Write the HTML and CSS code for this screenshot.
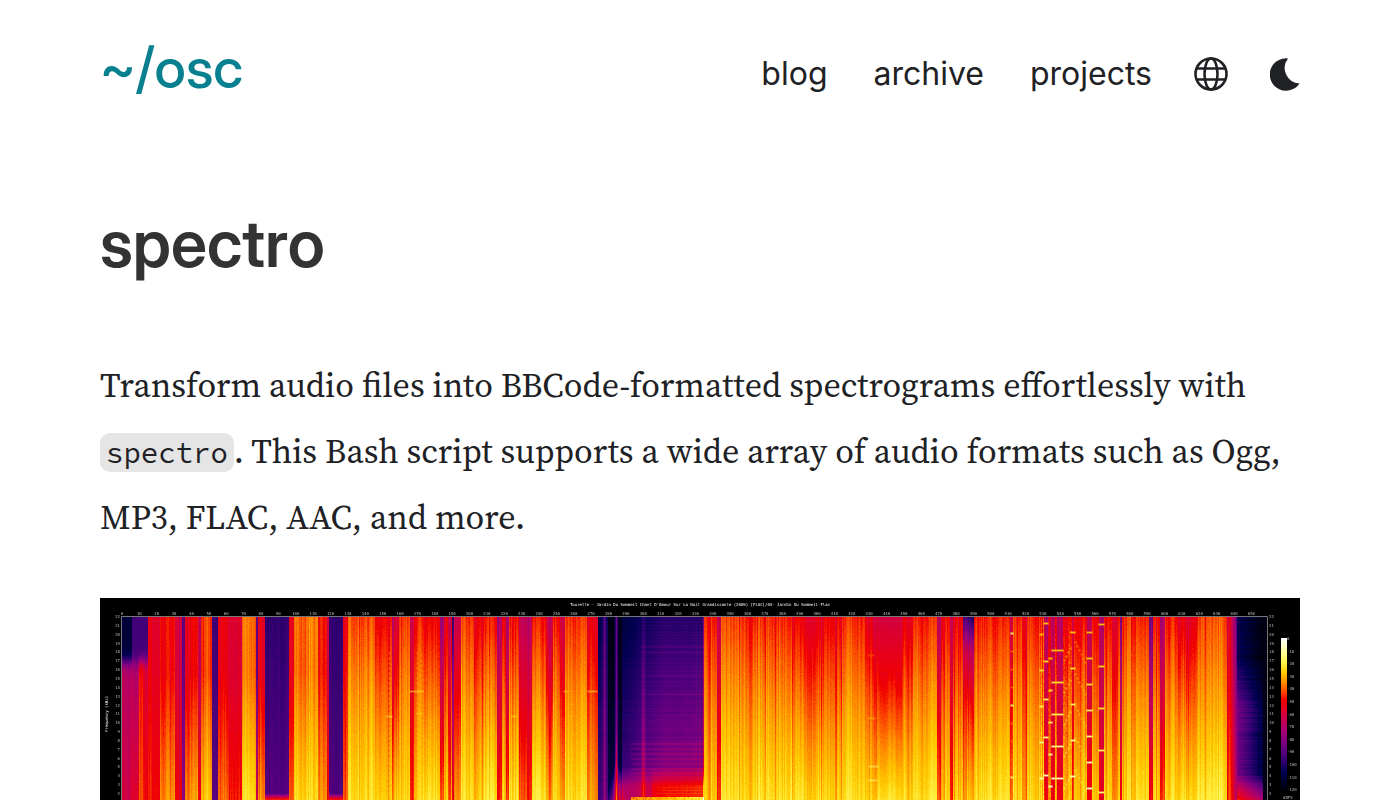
FILE: index.html
```html
<!DOCTYPE html>
<html lang="en">
<head>
<meta charset="utf-8">
<meta name="viewport" content="width=device-width, initial-scale=1">
<title>spectro</title>
<link rel="stylesheet" href="styles.css">
</head>
<body>
<header class="site-header">
  <a class="logo" href="#">~/osc</a>
  <nav class="nav">
    <a href="#">blog</a>
    <a href="#">archive</a>
    <a href="#">projects</a>
    <a class="icon" href="#" aria-label="Language">
      <svg class="globe" viewBox="0 0 36 36" fill="none" stroke="currentColor" stroke-width="2.6"><circle cx="18" cy="18" r="15.5"/><ellipse cx="18" cy="18" rx="6.5" ry="15.5"/><path d="M3.5 12.5h29M3.5 23.5h29"/></svg>
    </a>
    <button class="icon" type="button" aria-label="Toggle theme">
      <svg class="moon" viewBox="0 0 30 33" fill="currentColor"><path d="M18 0.4A16.2 16.2 0 1 0 29.5 25.4A15.5 15.5 0 0 1 18 0.4Z"/></svg>
    </button>
  </nav>
</header>
<main class="content">
  <h1 class="title">spectro</h1>
  <p class="intro">Transform audio files into BBCode-formatted spectrograms effortlessly with <code class="code">spectro</code>. This Bash script supports a wide array of audio formats such as Ogg, MP3, FLAC, AAC, and more.</p>
  <figure class="spectrogram">
    <canvas class="plot" id="plot" width="1200" height="202"></canvas>
    <svg class="labels" id="labels" viewBox="0 0 1200 202" role="img" aria-label="Spectrogram"></svg>
  </figure>
</main>
<script src="spectrogram.js"></script>
</body>
</html>
```
FILE: styles.css
```css
* { box-sizing: border-box; }

body {
  margin: 0;
  padding: 0 100px;
  background: #fff;
  color: #202124;
  font-family: Inter, "Liberation Sans", sans-serif;
}

.site-header {
  display: flex;
  align-items: center;
  justify-content: space-between;
  padding-top: 36px;
}

.logo,
.title {
  font-family: "Inter Display", Inter, "Liberation Sans", sans-serif;
}

.logo {
  color: #08808f;
  font-size: 56px;
  font-weight: 500;
  line-height: 64px;
  text-decoration: none;
}

.nav {
  display: flex;
  align-items: center;
  gap: 46px;
  padding-top: 12px;
  font-size: 32px;
  line-height: 42px;
}

.nav a {
  color: inherit;
  text-decoration: none;
}

.icon {
  display: flex;
  padding: 0;
  border: 0;
  background: none;
  color: #202124;
}

.nav .icon { margin-left: -5px; }

.globe { width: 36px; height: 36px; }
.moon { width: 30px; height: 33px; }

.title {
  margin: 104px 0 0;
  color: #333;
  font-size: 65px;
  font-weight: 600;
  line-height: 80px;
}

.intro {
  margin: 68px 0 48px;
  font-family: "Source Serif 4 SmText", "Source Serif 4", "Liberation Serif", serif;
  font-size: 34px;
  line-height: 66px;
}

.code {
  padding: 1px 6px;
  border-radius: 10px;
  background: #e5e5e5;
  font-family: "Source Code Pro", "Noto Sans Mono", "DejaVu Sans Mono", monospace;
  font-size: 29px;
  line-height: 32px;
}

.spectrogram {
  display: grid;
  margin: 0;
  background: #000;
}

.plot,
.labels {
  display: block;
  grid-area: 1 / 1;
  width: 100%;
  height: auto;
}

.labels {
  fill: #b8b8b8;
  font-family: "DejaVu Sans Mono", monospace;
  font-size: 4px;
}

.labels .middle { text-anchor: middle; }
.labels .end { text-anchor: end; }
.labels .caption { fill: #fff; }
.labels .axis { fill: none; stroke: #777; }
```
FILE: spectrogram.js
```js
const canvas = document.getElementById('plot');
const ctx = canvas.getContext('2d');
const W = 1200, H = 202, TOP = 19, LEFT = 22, RIGHT = 1167;

let seed = 7;
function rnd() {
  seed = (seed * 1664525 + 1013904223) >>> 0;
  return seed / 4294967296;
}

function color(x) {
  x = Math.max(0, Math.min(1, x));
  const q = Math.PI / 2;
  const r = x < 0.13 ? 0 : x < 0.73 ? Math.sin((x - 0.13) / 0.6 * q) : 1;
  const g = x < 0.6 ? 0 : x < 0.91 ? Math.sin((x - 0.6) / 0.31 * q) : 1;
  const b = x < 0.6 ? 0.5 * Math.sin(x / 0.6 * Math.PI) : x < 0.78 ? 0 : (x - 0.78) / 0.22;
  return [r * 255, g * 255, b * 255];
}

// [end x, level at the top, level at the bottom]
const segments = [
  [32, .42, .5], [39, .38, .54], [45, .57, .64], [48, .47, .58], [60, .55, .61], [75, .60, .72], [82, .49, .57],
  [85, .28, .36], [98, .59, .73], [101, .47, .6], [112, .64, .77], [118, .22, .27], [129, .58, .69],
  [142, .53, .62], [156, .69, .81], [158, .3, .5], [165, .56, .72], [189, .20, .26], [194, .56, .67],
  [209, .68, .80], [218, .71, .81], [227, .62, .73], [229, .48, .6], [243, .20, .25], [248, .60, .70], [275, .69, .81],
  [283, .60, .77], [292, .63, .78], [294, .46, .7], [299, .55, .79], [310, .68, .8], [312, .5, .63], [314, .58, .67],
  [323, .65, .79], [340, .62, .81], [344, .42, .68], [348, .60, .79], [351, .50, .66], [352, .6, .75],
  [354, .24, .60], [361, .50, .71], [374, .68, .82], [380, .60, .77], [397, .64, .82], [402, .44, .62],
  [406, .6, .79], [409, .45, .67], [419, .63, .81], [427, .49, .67], [432, .46, .62], [446, .64, .82],
  [453, .51, .73], [460, .64, .80], [465, .52, .73], [487, .68, .82], [498, .59, .72], [604, .1, .4],
  [617, .66, .79], [621, .49, .63], [645, .68, .81], [653, .64, .79], [690, .66, .81], [700, .63, .82],
  [724, .60, .81], [742, .62, .79], [765, .66, .81], [773, .57, .77], [778, .56, .79], [802, .50, .80], [807, .6, .81], [813, .58, .78],
  [837, .66, .82], [841, .48, .68], [850, .64, .80], [853, .52, .65], [863, .63, .80], [867, .43, .62],
  [874, .40, .68], [910, .65, .81], [913, .51, .68], [922, .66, .80], [927, .57, .70], [944, .66, .80],
  [948, .47, .60], [951, .61, .74], [955, .47, .58], [957, .6, .75], [963, .45, .57], [972, .63, .78],
  [974, .51, .63], [987, .64, .80], [992, .48, .59], [999, .64, .79], [1004, .46, .57], [1012, .63, .79],
  [1018, .54, .70], [1020, .64, .79], [1022, .37, .62], [1031, .68, .81], [1036, .61, .75], [1049, .65, .80],
  [1053, .34, .60], [1060, .63, .79], [1065, .45, .66], [1078, .64, .80], [1086, .59, .80], [1092, .55, .78],
  [1098, .61, .80], [1127, .66, .83], [1131, .57, .68], [1135, .46, .58], [1167, .1, .3]
];

function gauss(v, c, w) {
  const d = (v - c) / w;
  return Math.exp(-d * d);
}

const img = ctx.createImageData(W, H);
const rowNoise = Array.from({ length: H }, () => rnd() - 0.5);
let k = 0, wave = 0;
for (let x = 0; x < W; x++) {
  while (k < segments.length - 1 && x >= segments[k][0]) k++;
  const [, top, bottom] = segments[k];
  const dark = top < 0.3;
  wave = wave * 0.45 + (rnd() - 0.5) * (dark ? 0.02 : 0.056);
  const stripe = !dark && rnd() < 0.06 ? -0.05 : 0;
  const curve = 1.0 + rnd() * 0.25;
  for (let y = 0; y < H; y++) {
    const i = (y * W + x) * 4;
    img.data[i + 3] = 255;
    if (y < TOP || x < LEFT || x >= RIGHT) continue;
    const t = (y - TOP) / (H - TOP);
    let v = top + (bottom - top) * Math.pow(t, curve) + wave + stripe;
    if (x >= 60 && x < 232 && !dark) v = top + (bottom - top) * Math.max(0, (t - 0.3) / 0.7) + wave + stripe;
    if (x >= 248 && x < 1100) v -= 0.035 * (1 - t) * (1 - t) * (1 - t);
    if (x >= 778 && x < 802) v = t < 0.3 ? 0.5 + t * 0.3 : 0.58 + (t - 0.3) * 0.34 + wave * 0.6;
    if (x < 48) {
      const m = 1 / (1 + Math.exp(-(y - 63) / 4));
      v = v * m + (x < 32 ? 0.09 : 0.23) * (1 - m);
    }
    if (dark && x >= 165 && x < 243) v += Math.max(0, y - 195) * 0.06;
    if (x >= 498 && x < 604) {
      const u = (x - 498) / 106;
      v = 0.05 + 0.14 * Math.min(1, u * 1.6) + 0.12 * t + 0.08 * u * t + wave * 0.5;
      if (x < 508) v = 0.14 + 0.1 * t + wave;
      else if (x < 522) v = 0.03 + 0.1 * t * t;
      v += rowNoise[y] * (x > 541 ? 0.03 : 0.015) + (x > 530 && y > 143 && y < 176 && y % 5 < 2 ? 0.05 : 0);
      if (x > 541 && [48, 54, 77, 96].includes(y)) v += 0.05;
      v += 0.28 * gauss(x, 516, 1.4) + 0.15 * gauss(x, 504, 1.2) + 0.12 * gauss(x, 543, 2) * (0.4 + t);
      v += 0.3 * gauss(x, 516, 1 + 5 * Math.max(0, (y - 165) / 35)) * Math.max(0, (y - 130) / 70);
      if (x > 518) v += (u > 0.5 ? 0.26 : 0.18) * Math.min(1, Math.max(0, (y - 168) / 20));
      if (x > 530 && y >= 199) v = 0.65 + 0.18 * u + (rnd() - 0.5) * 0.08;
      if (x >= 603) v += 0.15;
    }
    if (x >= 863 && x < 874) v -= 0.16 * Math.max(0, 1 - (y - TOP) / 34) - 0.1 * Math.min(1, t * 2);
    if (x >= 1130 && x < 1137) v = 0.57 - (x - 1129) * 0.038 + t * 0.12;
    if (x >= 1137) {
      const u = (x - 1137) / 28;
      v = 0.13 - 0.12 * u + rowNoise[y] * 0.05;
      if (u < 0.92) v += 0.18 * Math.min(1, Math.max(0, (y - 60) / 50)) * (1 - u * 0.6);
      if (y > 175 && x < 1163) v += (y - 175) * 0.012;
      if (x >= 1163) v = 0.03;
    }
    if (x >= 940 && x < 972) {
      v += (rnd() - 0.5) * 0.05;
    }
    v += (rnd() - 0.5) * 0.022;
    const c = color(v);
    img.data[i] = c[0];
    img.data[i + 1] = c[1];
    img.data[i + 2] = c[2];
  }
}
ctx.putImageData(img, 0, 0);

// Bright partials: a soft halo around a one-pixel core.
function dash(x, y, w, level, core = 1) {
  ctx.fillStyle = `rgb(${color(level).map(Math.round).join(',')})`;
  ctx.globalAlpha = 0.4 * core;
  ctx.fillRect(x - 1, y - 1, w + 2, 3);
  ctx.globalAlpha = core;
  ctx.fillRect(x, y, w, 1);
  ctx.globalAlpha = 1;
}
for (let n = 0; n < 5; n++) {
  const y = 25 + n * 38;
  const l = 0.77 + n * 0.04;
  dash(944, y, 4, l);
  dash(940, y + 11 - n * 2, 3, l);
  dash(952, 52 + n * 32, 11, l);
  dash(949, 60 + n * 32, 3, l);
  dash(971, 34 + n * 36, 4, l);
  for (let s = 0; s < 6; s++) dash(975 + s * 2, 44 + n * 32 + s * 4, 1, 0.74 + n * 0.03, 0.5);
  for (let s = 0; s < 4; s++) dash(964 + s * 2, 62 + n * 32 - s * 4, 1, 0.76 + n * 0.03, 0.6);
}
for (let n = 0; n < 7; n++) dash(987, 34 + n * 26, 5, 0.76 + n * 0.03);
for (let n = 0; n < 5; n++) dash(999, 26 + n * 42, 5, 0.76 + n * 0.03);
for (let n = 0; n < 11; n++) dash(911, 35 + n * 18, 2, n % 4 === 0 ? 0.86 : 0.7, n % 4 === 0 ? 1 : 0.6);
[[310, 93, 13, .82], [317, 115, 5, .8], [287, 118, 5, .85], [411, 118, 6, .8], [488, 93, 9, .82], [464, 93, 3, .8],
 [768, 57, 6, .67], [768, 120, 7, .76], [769, 168, 9, .88], [769, 182, 8, .88]].forEach(d => dash(...d, 0.5));
for (let y = 55; y < 200; y += 5) {
  dash(289, y, 1, 0.7 + y / 1700, 0.45);
  dash(317, y, 1, 0.7 + y / 1700, 0.45);
  dash(321, y + 2, 1, 0.7 + y / 1700, 0.45);
}

for (let y = 40; y < 194; y++) {
  ctx.fillStyle = `rgb(${color(1 - (y - 40) / 154).map(Math.round).join(',')})`;
  ctx.fillRect(1181, y, 6, 1);
}

const svg = document.getElementById('labels');
function add(name, attrs, text) {
  const el = document.createElementNS('http://www.w3.org/2000/svg', name);
  for (const key in attrs) el.setAttribute(key, attrs[key]);
  if (text !== undefined) el.textContent = text;
  svg.appendChild(el);
}
add('path', { class: 'axis', d: 'M21.5 202V18.5H1167.5V202' });
add('text', { class: 'middle caption', x: 600, y: 8 },
  "Tourette - Jardin Du Sommeil Chant D'Amour Sur La Nuit Grandissante (2009) [FLAC]/04- Jardin Du Sommeil-Flac");
for (let n = 0; n <= 65; n++) add('text', { class: 'middle', x: 22 + n * 17.375, y: 17 }, n * 10);
for (let n = 22; n >= 2; n--) {
  const y = 20 + (22 - n) * 8.85;
  add('text', { class: 'end', x: 20, y }, n);
  add('text', { x: 1169, y }, n);
}
for (let n = 0; n <= 12; n++) add('text', { x: 1187, y: 42 + n * 12.6 }, n ? '-' + n * 10 : '0');
add('text', { x: 1183, y: 201 }, 'dBFS');
add('text', { class: 'middle caption', transform: 'translate(8 116) rotate(-90)' }, 'Frequency (kHz)');
```
